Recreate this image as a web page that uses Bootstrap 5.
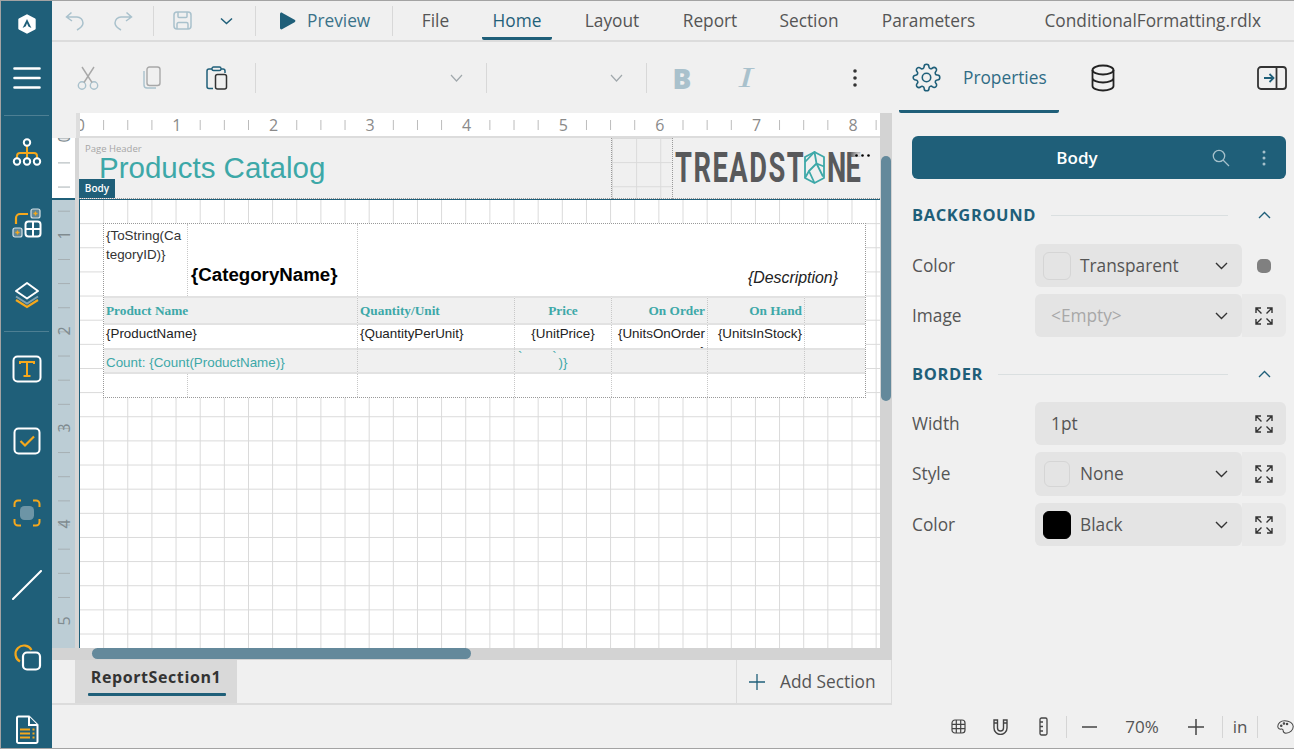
<!DOCTYPE html>
<html lang="en">
<head>
<meta charset="utf-8">
<title>ConditionalFormatting.rdlx</title>
<link href="https://cdn.jsdelivr.net/npm/bootstrap@5.3.0/dist/css/bootstrap.min.css" rel="stylesheet">
<style>
html,body{height:100%;margin:0;overflow:hidden}
body{font-family:"Open Sans",sans-serif;background:#f0f0f0;color:#555;font-size:17.3px}
.app-win{width:1294px;height:749px;border:1px solid #a3a3a3;border-right-width:0;overflow:hidden;background:#f0f0f0}
.side-rail{width:51px;background:#1f5f79;flex:none;overflow:hidden}
.rail-logo{height:46px;flex:none}.rail-menu{height:68px;flex:none;padding-bottom:6px}
.rail-sep{height:1px;background:#4d7f93;margin:0 3px;flex:none}
.rail-tool{height:72px;flex:none}
.rail-tool-a{height:71px}
.rail-gap{height:1px;flex:none}
.top-menu{height:41px;border-bottom:2px solid #dcdcdc;flex:none}
.tool-bar{height:71px;flex:none}
.slot{display:flex;align-items:center;justify-content:center;flex:none;height:100%}
.v-rule{width:1px;background:#d8d8d8;height:30px;display:block}
.w46{width:46px}.w49{width:49px}.w12{width:12px}.w42{width:42px}.w16{width:16px}.w21{width:21px}
.preview-slot{width:121px;justify-content:flex-start;padding-left:16px;color:#3a7289;gap:11px}
.mtab{color:#555;position:relative;padding-top:1px}
.mtab-file{width:71px}.mtab-home{width:70px;margin-left:11px;color:#1f5f79;border-bottom:3px solid #1f5f79;border-radius:0 0 2px 2px;padding-top:4px}
.mtab-layout{width:124px;padding-right:4px}.mtab-report{width:68px}.mtab-section{width:130px}.mtab-param{width:109px}
.file-name{margin-left:auto;padding-right:33px;padding-top:1px}
.t-cut{width:72px}.t-copy{width:56px}.t-paste{width:74px}.t-rule1{width:3px}
.t-font{width:225px;justify-content:flex-end;padding-right:19px}
.t-rule2{width:9px}
.t-size{width:151px;justify-content:flex-end;padding-right:19px}
.t-rule3{width:9px}
.t-b{width:62px}.t-i{width:66px}.t-more{width:120px;padding-left:32px}
.prop-tab{width:160px;height:71px;border-bottom:3px solid #1f5f79;color:#2f6c85;gap:22px;padding:3px 0 0 13px;border-radius:0 0 2px 2px;justify-content:flex-start}
.t-db{width:88px}.t-panel{margin-left:auto;width:44px}
.bold-b{font-family:"Open Sans",sans-serif;font-weight:800;font-size:28px;color:#a9c1cc;line-height:1}
.ital-i{font-family:"Liberation Serif",serif;font-style:italic;font-size:29px;color:#a9c1cc;line-height:1;display:inline-block;transform:scaleX(1.5)}
.main-row{flex:none;height:592px}
.work-col{width:840px;flex:none}
.design-row{height:535px;flex:none;overflow:hidden}
.ruler-pane{width:828px;flex:none}
.ruler-corner{height:25px;flex:none;overflow:hidden}
.corner-gap{width:24px;flex:none;background:#f0f0f0}
.corner-line{width:4px;flex:none;background:#dedede}
.top-ruler{flex:1;background-color:#fff;background-image:linear-gradient(90deg,#b9b9b9 1px,transparent 1px);background-size:24.15px 10px;background-position:-1px 7px;background-repeat:repeat-x;overflow:hidden;border-bottom:2px solid #dcdcdc;height:25px}
.top-num{width:96.6px;flex:none;text-align:center;line-height:24px;font-size:16px;color:#8a8a8a}
.top-num span{background:#fff;padding:0 3px}
.first-num{margin-left:-48px}
.left-ruler{width:23px;flex:none;overflow:hidden;background-color:#bccdd5}
.ruler-white{height:60px;flex:none;background-color:#fff;border-bottom:2px solid #1f5f79;overflow:hidden;box-sizing:content-box}
.ruler-ticks{background-image:linear-gradient(#a5aeb2 1px,transparent 1px);background-size:12px 24.15px;background-position:6px 0;background-repeat:repeat-y;height:100%}
.ruler-body{flex:1;overflow:hidden;margin-top:-62px;position:relative}
.left-num{height:96.6px;display:flex;align-items:center;justify-content:center;font-size:16px;color:#7f8b90;line-height:1}
.left-num span{display:block;transform:rotate(-90deg);padding:0 2px}
.left-first{margin-top:-48.3px}
.rule-gap{width:4px;flex:none;background:#d6d6d6}
.page-scroll{flex:1;overflow:hidden}
.page-head{height:62px;background:#f0f0f0;flex:none;position:relative;border-bottom:1px solid #1f5f79}
.head-title{width:533px;flex:none;border-right:1px dotted #999;border-bottom:1px dotted #999;position:relative;overflow:hidden}
.head-cap{font-size:9.5px;color:#a6a6a6;padding:5px 0 0 6px;line-height:12px}
.head-text{font-family:"Liberation Sans",sans-serif;font-size:29.5px;color:#3da8a8;line-height:30px;padding-left:20px;margin-top:-2px;white-space:nowrap}
.head-gap{width:60px;flex:none;background-image:linear-gradient(90deg,#dadada 1px,transparent 1px),linear-gradient(#dadada 1px,transparent 1px);background-size:24.15px 24.15px;background-position:0 0;border-bottom:1px dotted #999}
.head-logo{flex:1;border-left:1px dotted #999;border-bottom:1px dotted #999;position:relative;overflow:hidden;padding-left:2px}
.body-flag{position:absolute;left:0;top:41px;width:36px;height:19px;background:#1f5f79;color:#fff;font-size:10px;line-height:19px;text-align:center;font-weight:600}
.more-dots{position:absolute;left:178px;top:7px;width:22px;height:20px;display:flex;align-items:center;justify-content:center;background:radial-gradient(circle at 8px 10px,rgba(240,240,240,.9),rgba(240,240,240,0) 9px)}
.page-grid{flex:1;background-color:#fff;background-image:linear-gradient(90deg,#d9d9d9 1px,transparent 1px),linear-gradient(#d9d9d9 1px,transparent 1px);background-size:24.15px 24.15px;background-position:-1px -1px;padding:23px 0 0 23px;border-left:1px solid #1f5f79}
.rep-table{width:763px;box-sizing:border-box;display:grid;grid-template-columns:84px 170px 157px 97px 96px 97px 60px;grid-template-rows:72px 29px 23px 26px 23px;border:1px dotted #999;background:#fff;font-family:"Liberation Sans",sans-serif;font-size:13.4px;color:#222}
.rep-cell{overflow:hidden;line-height:15px}
.cell-r{border-right:1px dotted #c8c8c8}
.band{background:#f0f0f0}
.band-top{border-top:2px solid #e2e2e2}
.band-bot{border-bottom:2px solid #e2e2e2}
.cell-group{padding:2px 5px 0 2px;word-break:break-all;line-height:19px;color:#333}
.group-name{font-size:18.7px;font-weight:700;color:#000;padding:41px 0 0 3px;line-height:20px;white-space:nowrap}
.group-desc{grid-column:span 5;text-align:right;font-style:italic;font-size:15.9px;padding:45px 27px 0 0;line-height:18px;color:#222}
.col-head{font-family:"Liberation Serif",serif;font-weight:700;color:#3da8a8;font-size:13.3px;padding:5px 2px 0 2px;white-space:nowrap}
.col-wide{grid-column:span 2}
.col-data{padding:0 2px;line-height:18px;height:23px}
.col-clip{padding-left:4px}
.col-foot{color:#3da8a8;padding:5px 2px 0 2px;white-space:nowrap}
.txt-c{text-align:center}.txt-r{text-align:right}
.price-foot{color:#3da8a8;line-height:13px;padding:0;margin:0;white-space:pre}
.price-tick{height:5px;overflow:hidden;display:block;line-height:13px;padding-left:3px}
.price-end{display:block;text-align:center;line-height:16px}
.v-track{width:12px;flex:none;background:#d3d3d3;padding:43px 1px 0 1px}
.v-thumb{height:245px;background:#64899b;border-radius:5px}
.h-track{height:12px;flex:none;background:#d3d3d3;padding-left:40px}
.h-thumb{width:379px;height:11px;background:#64899b;border-radius:6px}
.tab-strip{height:45px;flex:none;border-bottom:2px solid #dcdcdc}
.rep-tab{width:162px;margin-left:23px;background:#d9d9d9;font-weight:700;font-size:16px;color:#333;letter-spacing:.6px;text-align:center;padding-top:4px;line-height:26px;height:43px}
.rep-tab i{display:block;height:3px;background:#1f5f79;margin:3px 11px 0 13px;border-radius:1px}
.add-sec{margin-left:auto;width:156px;border-left:1px solid #dcdcdc;border-right:1px solid #dcdcdc;gap:15px;padding-left:12px;height:43px;color:#555}
.work-wrap{flex:1;min-width:0}
.prop-pane{width:402px;flex:none;padding:23px 8px 0 20px}
.obj-bar{height:43px;background:#1f5f79;border-radius:6px;color:#fff;font-weight:600;font-size:17px;padding-left:32px}
.obj-name{width:266px;flex:none;text-align:center}
.obj-icon{width:22px}
.sec-head{color:#1f5f79;font-weight:700;font-size:16.5px;letter-spacing:.6px;line-height:22px}
.sec-bg{margin-top:25px}.sec-bd{margin-top:26px}
.sec-rule{flex:1;height:1px;background:#dadfe0;margin:0 0 0 15px}
.sec-chev{width:58px;padding-right:15px;display:flex;justify-content:flex-end}
.prop-row{height:43px;margin-bottom:7px}
.prop-row.first{margin-top:18px}
.prop-row.next{margin-top:17px}
.prop-row.tall{height:44px}
.prop-label{width:123px;flex:none;color:#555}
.label-low{padding-top:1px}
.sel-box{width:207px;height:100%;background:#e4e4e4;border-radius:6px;padding:0 14px 0 8px;flex:none}
.sel-full{width:251px;padding-left:16px;padding-right:13px}
.swatch{width:28px;height:28px;border:1px solid #d5d5d5;border-radius:6px;margin-right:9px;flex:none}
.swatch-small{width:26px;height:26px;margin-left:1px;margin-right:10px}
.swatch-black{background:#000;border-color:#000}
.empty-val{color:#a8a8a8;padding-left:8px}
.chev-end{margin-left:auto;display:flex}
.exp-btn{width:44px;height:100%;background:#e9e9e9;border-radius:0 6px 6px 0;flex:none}
.dot-btn{width:44px;height:100%;flex:none}
.flat-dot{width:14px;height:14px;border-radius:5px;background:#808080;display:block}
.status-bar{height:43px;flex:none;overflow:hidden;min-width:0}
.st-slot{height:100%;display:flex;align-items:center;justify-content:center;flex:none}
.s-grid{margin-left:885px;width:42px}.s-mag{width:42px}.s-rul{width:45px}
.s-minus{width:45px}.s-zoom{width:60px;font-size:17px}.s-plus{width:50px;padding-right:2px}.s-in{width:34px;font-size:17px}
.s-pal{width:36px;justify-content:flex-start;padding-left:19px}
.s-rule{width:1px;height:22px;background:#d5d5d5;display:block;flex:none}
</style>
</head>
<body>
<div class="app-win d-flex">
  <aside class="side-rail d-flex flex-column">
    <div class="rail-logo d-flex align-items-center justify-content-center">
      <svg width="20" height="22" viewBox="0 0 20 22"><path d="M10 1.2 18.2 5.6a1 1 0 0 1 .5.9v9a1 1 0 0 1-.5.9L10 20.8 1.8 16.4a1 1 0 0 1-.5-.9v-9a1 1 0 0 1 .5-.9z" fill="#fff"/><path d="M10 6 5.6 15l3.2-1.8 1.2-3 1.4 3.2 3 1.6z" fill="#1f5f79"/></svg>
    </div>
    <div class="rail-menu d-flex align-items-center justify-content-center">
      <svg width="28" height="24" viewBox="0 0 28 24" fill="none" stroke="#fff" stroke-width="2.6" stroke-linecap="round"><path d="M1.500 2.500h25M1.500 12h25M1.500 21.500h25"/></svg>
    </div>
    <div class="rail-sep"></div>
    <div class="rail-tool rail-tool-a d-flex align-items-center justify-content-center">
      <svg width="30" height="28" viewBox="0 0 30 28" fill="none" stroke-width="2"><path d="M15 8v7M5 21v-3a3 3 0 0 1 3-3h14a3 3 0 0 1 3 3v3M15 15v6" stroke="#f5a81c"/><g stroke="#fff"><circle cx="15" cy="4.500" r="3.200"/><circle cx="5" cy="23.500" r="3.200"/><circle cx="15" cy="23.500" r="3.200"/><circle cx="25" cy="23.500" r="3.200"/></g></svg>
    </div>
    <div class="rail-tool d-flex align-items-center justify-content-center">
      <svg width="30" height="30" viewBox="0 0 30 30" fill="none"><path d="M4 16v-6a4 4 0 0 1 4-4h8" stroke="#f5a81c" stroke-width="2.200"/><rect x="19" y="1" width="9" height="9" rx="2" fill="#5f8799" stroke="#d7e2e6" stroke-width="1.200"/><path d="M21.500 5.500h4M23.500 3.500v4" stroke="#f5a81c" stroke-width="1.300"/><rect x="1" y="20" width="9" height="9" rx="2" fill="#5f8799" stroke="#d7e2e6" stroke-width="1.200"/><path d="M3.500 24.500h4M5.500 22.500v4" stroke="#f5a81c" stroke-width="1.300"/><rect x="13.500" y="13.500" width="15" height="15" rx="3" fill="#1f5f79" stroke="#fff" stroke-width="2"/><path d="M21 13.500v15M13.500 21h15" stroke="#fff" stroke-width="2"/></svg>
    </div>
    <div class="rail-tool d-flex align-items-center justify-content-center">
      <svg width="26" height="28" viewBox="0 0 26 28" fill="none"><path d="M2 19l11 7 11-7" stroke="#f5a81c" stroke-width="2.200"/><path d="M2 15.500l11 7 11-7" stroke="#7fa1b0" stroke-width="2"/><path d="M13 2 24 10 13 17.500 2 10z" stroke="#fff" stroke-width="2" stroke-linejoin="round"/></svg>
    </div>
    <div class="rail-sep"></div>
    <div class="rail-gap"></div>
    <div class="rail-tool d-flex align-items-center justify-content-center">
      <svg width="30" height="28" viewBox="0 0 30 28" fill="none"><rect x="1.500" y="1.500" width="27" height="25" rx="4" stroke="#fff" stroke-width="2"/><path d="M8 9V7h14v2M15 7v14M11.500 21h7" stroke="#f5a81c" stroke-width="2"/></svg>
    </div>
    <div class="rail-tool d-flex align-items-center justify-content-center">
      <svg width="28" height="28" viewBox="0 0 28 28" fill="none"><rect x="1.500" y="1.500" width="25" height="25" rx="4" stroke="#fff" stroke-width="2"/><path d="M7.500 14l4.500 4.500 9-9" stroke="#f5a81c" stroke-width="2.200"/></svg>
    </div>
    <div class="rail-tool d-flex align-items-center justify-content-center">
      <svg width="28" height="28" viewBox="0 0 28 28" fill="none"><rect x="7" y="7" width="14" height="14" rx="4.500" fill="#6d95a6"/><path d="M1.500 8V5a3.500 3.500 0 0 1 3.500-3.500h3M20 1.500h3A3.500 3.500 0 0 1 26.500 5v3M26.500 20v3a3.500 3.500 0 0 1-3.500 3.500h-3M8 26.500H5A3.500 3.500 0 0 1 1.500 23v-3" stroke="#f5a81c" stroke-width="2"/></svg>
    </div>
    <div class="rail-tool d-flex align-items-center justify-content-center">
      <svg width="30" height="30" viewBox="0 0 30 30" fill="none"><path d="M1 29 29 1" stroke="#fff" stroke-width="2" stroke-linecap="round"/></svg>
    </div>
    <div class="rail-tool d-flex align-items-center justify-content-center">
      <svg width="30" height="30" viewBox="0 0 30 30" fill="none"><path d="M8 19.500A8.500 8.500 0 1 1 19.500 8" stroke="#f5a81c" stroke-width="2.200"/><rect x="11" y="10.500" width="17" height="17" rx="4" stroke="#fff" stroke-width="2.200"/></svg>
    </div>
    <div class="rail-tool d-flex align-items-center justify-content-center">
      <svg width="24" height="29" viewBox="0 0 24 29" fill="none"><path d="M2 3a1.500 1.500 0 0 1 1.500-1.500H14L22.500 10v16.500A1.500 1.500 0 0 1 21 28H3.500A1.500 1.500 0 0 1 2 26.500z" stroke="#fff" stroke-width="2"/><path d="M14 1.500V10h8.500" stroke="#fff" stroke-width="2" fill="#1f5f79"/><path d="M5 14.500h10M5 18.500h10M5 22.500h10" stroke="#f5a81c" stroke-width="2"/><path d="M17.500 14.500h2M17.500 18.500h2M17.500 22.500h2" stroke="#f5a81c" stroke-width="2"/></svg>
    </div>
  </aside>

  <div class="work-wrap d-flex flex-column">
    <nav class="top-menu d-flex align-items-center">
      <div class="slot w46"><svg width="20" height="20" viewBox="0 0 20 20" fill="none" stroke="#a9c1cc" stroke-width="1.500"><path d="M6.500 1.500 1.500 6 7 10M1.500 6H12a6 6 0 0 1 6 6c0 2.500-2.500 5-6 7"/></svg></div>
      <div class="slot w49"><svg width="20" height="20" viewBox="0 0 20 20" fill="none" stroke="#a9c1cc" stroke-width="1.500"><path d="M13.500 1.500 18.500 6 13 10M18.500 6H8a6 6 0 0 0-6 6c0 2.500 2.500 5 6 7"/></svg></div>
      <div class="slot w12"><span class="v-rule"></span></div>
      <div class="slot w46"><svg width="19" height="19" viewBox="0 0 19 19" fill="none" stroke="#a9c1cc" stroke-width="1.500"><rect x="1" y="1" width="17" height="17" rx="3"/><path d="M5 1v4.500a1 1 0 0 0 1 1h7a1 1 0 0 0 1-1V1M4 18v-5a1.500 1.500 0 0 1 1.500-1.500h8A1.500 1.500 0 0 1 15 13v5"/></svg></div>
      <div class="slot w42"><svg width="13" height="8" viewBox="0 0 13 8" fill="none" stroke="#1f5f79" stroke-width="1.500"><path d="M1 1.500l5.500 5 5.500-5"/></svg></div>
      <div class="slot w16"><span class="v-rule"></span></div>
      <div class="slot preview-slot"><svg width="17" height="18" viewBox="0 0 17 18"><path d="M1 2.200C1 .8 2.300.2 3.400.9L15.600 7.800c1.100.6 1.100 1.800 0 2.400L3.400 17.100C2.300 17.800 1 17.200 1 15.800z" fill="#1f5f79"/></svg><span>Preview</span></div>
      <div class="slot w16"><span class="v-rule"></span></div>
      <div class="slot mtab mtab-file">File</div>
      <div class="slot mtab mtab-home">Home</div>
      <div class="slot mtab mtab-layout">Layout</div>
      <div class="slot mtab mtab-report">Report</div>
      <div class="slot mtab mtab-section">Section</div>
      <div class="slot mtab mtab-param">Parameters</div>
      <div class="file-name">ConditionalFormatting.rdlx</div>
    </nav>

    <div class="tool-bar d-flex align-items-center">
      <div class="slot t-cut"><svg width="22" height="24" viewBox="0 0 22 24" fill="none" stroke="#a9c1cc" stroke-width="1.400"><circle cx="5" cy="19.500" r="3.700"/><circle cx="17" cy="19.500" r="3.700"/><path d="M7 16.500 17 1" stroke="#a8a8a8"/><path d="M15 16.500 5 1" stroke="#a8a8a8"/></svg></div>
      <div class="slot t-copy"><svg width="18" height="23" viewBox="0 0 18 23" fill="none"><rect x="4" y="1" width="13" height="18.500" rx="2.500" stroke="#a8a8a8" stroke-width="1.400"/><path d="M1 5v14a3 3 0 0 0 3 3h9" stroke="#a9c1cc" stroke-width="1.400"/></svg></div>
      <div class="slot t-paste"><svg width="22" height="24" viewBox="0 0 22 24" fill="none"><path d="M6 3H3a2 2 0 0 0-2 2v15.500a2 2 0 0 0 2 2h4M15 3h2a2 2 0 0 1 2 2v2" stroke="#1f5f79" stroke-width="1.500"/><rect x="6" y="1" width="9" height="3.500" rx="1.500" stroke="#1f5f79" stroke-width="1.400"/><rect x="9.500" y="8.500" width="11" height="14.500" rx="2" stroke="#333" stroke-width="1.500"/></svg></div>
      <div class="slot t-rule1"><span class="v-rule"></span></div>
      <div class="slot t-font"><svg width="13" height="8" viewBox="0 0 13 8" fill="none" stroke="#a0a8ac" stroke-width="1.200"><path d="M1 1l5.500 6L12 1"/></svg></div>
      <div class="slot t-rule2"><span class="v-rule"></span></div>
      <div class="slot t-size"><svg width="13" height="8" viewBox="0 0 13 8" fill="none" stroke="#a0a8ac" stroke-width="1.200"><path d="M1 1l5.500 6L12 1"/></svg></div>
      <div class="slot t-rule3"><span class="v-rule"></span></div>
      <div class="slot t-b"><span class="bold-b">B</span></div>
      <div class="slot t-i"><span class="ital-i">I</span></div>
      <div class="slot t-more"><svg width="4" height="18" viewBox="0 0 4 18" fill="#333"><circle cx="2" cy="2" r="1.800"/><circle cx="2" cy="9" r="1.800"/><circle cx="2" cy="16" r="1.800"/></svg></div>
      <div class="slot prop-tab">
        <svg width="29" height="29" viewBox="0 0 24 24" fill="none" stroke="#1f5f79" stroke-width="1.300"><circle cx="12" cy="12" r="3.500"/><path d="M19.400 15a1.650 1.650 0 0 0 .33 1.820l.06.06a2 2 0 0 1 0 2.830 2 2 0 0 1-2.830 0l-.06-.06a1.650 1.650 0 0 0-1.820-.33 1.650 1.650 0 0 0-1 1.510V21a2 2 0 0 1-2 2 2 2 0 0 1-2-2v-.09A1.650 1.650 0 0 0 9 19.400a1.650 1.650 0 0 0-1.820.33l-.06.06a2 2 0 0 1-2.830 0 2 2 0 0 1 0-2.830l.06-.06a1.650 1.650 0 0 0 .33-1.820 1.650 1.650 0 0 0-1.510-1H3a2 2 0 0 1-2-2 2 2 0 0 1 2-2h.09A1.650 1.650 0 0 0 4.600 9a1.650 1.650 0 0 0-.33-1.820l-.06-.06a2 2 0 0 1 0-2.830 2 2 0 0 1 2.830 0l.06.06a1.650 1.650 0 0 0 1.820.33H9a1.650 1.650 0 0 0 1-1.510V3a2 2 0 0 1 2-2 2 2 0 0 1 2 2v.09a1.650 1.650 0 0 0 1 1.510 1.650 1.650 0 0 0 1.820-.33l.06-.06a2 2 0 0 1 2.830 0 2 2 0 0 1 0 2.830l-.06.06a1.650 1.650 0 0 0-.33 1.820V9a1.650 1.650 0 0 0 1.510 1H21a2 2 0 0 1 2 2 2 2 0 0 1-2 2h-.09a1.650 1.650 0 0 0-1.510 1z"/></svg>
        <span>Properties</span>
      </div>
      <div class="slot t-db"><svg width="24" height="28" viewBox="0 0 24 28" fill="none" stroke="#222" stroke-width="1.800"><ellipse cx="12" cy="6" rx="10.500" ry="4.500"/><path d="M1.500 6v16c0 2.500 4.700 4.500 10.500 4.500s10.500-2 10.500-4.500V6M1.500 14c0 2.500 4.700 4.500 10.500 4.500s10.500-2 10.500-4.500"/></svg></div>
      <div class="slot t-panel"><svg width="30" height="24" viewBox="0 0 30 24" fill="none"><rect x="1" y="1" width="28" height="22" rx="3" stroke="#333" stroke-width="1.800"/><path d="M19.500 1v22" stroke="#333" stroke-width="1.800"/><path d="M7 12h9M12.500 8l4 4-4 4" stroke="#1f5f79" stroke-width="1.800"/></svg></div>
    </div>

    <div class="main-row d-flex">
      <div class="work-col d-flex flex-column">
        <div class="design-row d-flex">
          <div class="ruler-pane d-flex flex-column">
            <div class="ruler-corner d-flex">
              <div class="corner-gap"></div>
              <div class="corner-line"></div>
              <div class="top-ruler d-flex">
                <div class="top-num first-num"><span>0</span></div>
                <div class="top-num"><span>1</span></div>
                <div class="top-num"><span>2</span></div>
                <div class="top-num"><span>3</span></div>
                <div class="top-num"><span>4</span></div>
                <div class="top-num"><span>5</span></div>
                <div class="top-num"><span>6</span></div>
                <div class="top-num"><span>7</span></div>
                <div class="top-num"><span>8</span></div>
              </div>
            </div>
            <div class="d-flex flex-fill overflow-hidden">
              <div class="left-ruler d-flex flex-column">
                <div class="ruler-white"></div>
                <div class="ruler-body">
                  <div class="ruler-ticks">
                    <div class="left-num left-first"><span>0</span></div>
                    <div class="left-num"><span>1</span></div>
                    <div class="left-num"><span>2</span></div>
                    <div class="left-num"><span>3</span></div>
                    <div class="left-num"><span>4</span></div>
                    <div class="left-num"><span>5</span></div>
                  </div>
                </div>
              </div>
              <div class="rule-gap"></div>
              <div class="page-scroll d-flex flex-column">
                <div class="page-head d-flex">
                  <div class="head-title">
                    <div class="head-cap">Page Header</div>
                    <div class="head-text">Products Catalog</div>
                  </div>
                  <div class="head-gap"></div>
                  <div class="head-logo">
                    <svg width="200" height="58" viewBox="0 0 200 58">
                      <text transform="scale(.65 1)" x="0" y="44" textLength="198" lengthAdjust="spacing" font-family="Roboto, sans-serif" font-weight="700" font-size="42" fill="#58595b">TREADST</text>
                      <g fill="none" stroke="#3da8a8" stroke-width="1.800" stroke-linejoin="round"><path d="M139.500 14l9.500 5v21l-9.500 5-9.500-5V19z"/><path d="M130 24l9.500-10 2 11.500 7.500 3M141.500 25.500 134 33l5.500 12M134 33l-4 7M141.500 25.500l6.500 13"/></g>
                      <text transform="scale(.65 1)" x="234" y="44" textLength="52" lengthAdjust="spacing" font-family="Roboto, sans-serif" font-weight="700" font-size="42" fill="#58595b">NE</text>
                    </svg>
                    <div class="more-dots"><svg width="15" height="3" viewBox="0 0 15 3" fill="#000"><circle cx="1.500" cy="1.500" r="1.300"/><circle cx="7.500" cy="1.500" r="1.300"/><circle cx="13.500" cy="1.500" r="1.300"/></svg></div>
                  </div>
                  <div class="body-flag">Body</div>
                </div>
                <div class="page-grid">
                  <div class="rep-table">
                    <div class="rep-cell cell-group cell-r">{ToString(CategoryID)}</div>
                    <div class="rep-cell group-name cell-r">{CategoryName}</div>
                    <div class="rep-cell group-desc">{Description}</div>

                    <div class="rep-cell col-head band band-top band-bot col-wide cell-r">Product Name</div>
                    <div class="rep-cell col-head band band-top band-bot cell-r">Quantity/Unit</div>
                    <div class="rep-cell col-head band band-top band-bot cell-r txt-c">Price</div>
                    <div class="rep-cell col-head band band-top band-bot cell-r txt-r">On Order</div>
                    <div class="rep-cell col-head band band-top band-bot cell-r txt-r">On Hand</div>
                    <div class="rep-cell col-head band band-top band-bot"></div>

                    <div class="rep-cell col-data col-wide cell-r">{ProductName}</div>
                    <div class="rep-cell col-data cell-r">{QuantityPerUnit}</div>
                    <div class="rep-cell col-data cell-r txt-c">{UnitPrice}</div>
                    <div class="rep-cell col-data col-clip cell-r txt-r">{UnitsOnOrder<wbr>}</div>
                    <div class="rep-cell col-data cell-r txt-r">{UnitsInStock}</div>
                    <div class="rep-cell col-data"></div>

                    <div class="rep-cell col-foot band band-top band-bot col-wide cell-r">Count: {Count(ProductName)}</div>
                    <div class="rep-cell band band-top band-bot cell-r"></div>
                    <div class="rep-cell band band-top band-bot cell-r price-foot"><span class="price-tick">`        `</span><span class="price-end">)}</span></div>
                    <div class="rep-cell band band-top band-bot cell-r"></div>
                    <div class="rep-cell band band-top band-bot cell-r"></div>
                    <div class="rep-cell band band-top band-bot"></div>

                    <div class="rep-cell cell-r"></div>
                    <div class="rep-cell cell-r"></div>
                    <div class="rep-cell cell-r"></div>
                    <div class="rep-cell cell-r"></div>
                    <div class="rep-cell cell-r"></div>
                    <div class="rep-cell cell-r"></div>
                    <div class="rep-cell"></div>
                  </div>
                </div>
              </div>
            </div>
          </div>
          <div class="v-track"><div class="v-thumb"></div></div>
        </div>
        <div class="h-track"><div class="h-thumb"></div></div>
        <div class="tab-strip d-flex">
          <div class="rep-tab">ReportSection1<i></i></div>
          <div class="add-sec d-flex align-items-center"><svg width="16" height="16" viewBox="0 0 16 16" fill="none" stroke="#1f5f79" stroke-width="1.300"><path d="M8 0v16M0 8h16"/></svg><span>Add Section</span></div>
        </div>
      </div>

      <section class="prop-pane flex-fill">
        <div class="obj-bar d-flex align-items-center">
          <div class="obj-name">Body</div>
          <div class="slot obj-icon"><svg width="18" height="18" viewBox="0 0 18 18" fill="none" stroke="#a5c0cb" stroke-width="1.300"><circle cx="7" cy="7" r="5.700"/><path d="M11 11l6 6"/></svg></div>
          <div class="slot w21"></div>
          <div class="slot obj-icon"><svg width="4" height="16" viewBox="0 0 4 16" fill="#a5c0cb"><circle cx="2" cy="2" r="1.500"/><circle cx="2" cy="8" r="1.500"/><circle cx="2" cy="14" r="1.500"/></svg></div>
        </div>

        <div class="sec-head sec-bg d-flex align-items-center">BACKGROUND<span class="sec-rule"></span><span class="sec-chev"><svg width="13" height="8" viewBox="0 0 13 8" fill="none" stroke="#1f5f79" stroke-width="1.400"><path d="M1 7l5.500-5.500L12 7"/></svg></span></div>
        <div class="prop-row first d-flex align-items-center">
          <div class="prop-label label-low">Color</div>
          <div class="sel-box d-flex align-items-center"><span class="swatch"></span>Transparent<span class="chev-end"><svg width="13" height="8" viewBox="0 0 13 8" fill="none" stroke="#333" stroke-width="1.400"><path d="M1 1l5.500 5.500L12 1"/></svg></span></div>
          <div class="dot-btn d-flex align-items-center justify-content-center"><span class="flat-dot"></span></div>
        </div>
        <div class="prop-row d-flex align-items-center">
          <div class="prop-label label-low">Image</div>
          <div class="sel-box d-flex align-items-center"><span class="empty-val">&lt;Empty&gt;</span><span class="chev-end"><svg width="13" height="8" viewBox="0 0 13 8" fill="none" stroke="#333" stroke-width="1.400"><path d="M1 1l5.500 5.500L12 1"/></svg></span></div>
          <div class="exp-btn d-flex align-items-center justify-content-center"><svg width="18" height="18" viewBox="0 0 18 18" fill="none" stroke="#333" stroke-width="1.400"><path d="M1 6V1h5M1 1l5.500 5.500M12 1h5v5M17 1l-5.500 5.500M1 12v5h5M1 17l5.500-5.500M17 12v5h-5M17 17l-5.500-5.500"/></svg></div>
        </div>

        <div class="sec-head sec-bd d-flex align-items-center">BORDER<span class="sec-rule"></span><span class="sec-chev"><svg width="13" height="8" viewBox="0 0 13 8" fill="none" stroke="#1f5f79" stroke-width="1.400"><path d="M1 7l5.500-5.500L12 7"/></svg></span></div>
        <div class="prop-row next d-flex align-items-center">
          <div class="prop-label">Width</div>
          <div class="sel-box sel-full d-flex align-items-center">1pt<span class="chev-end"><svg width="18" height="18" viewBox="0 0 18 18" fill="none" stroke="#333" stroke-width="1.400"><path d="M1 6V1h5M1 1l5.500 5.500M12 1h5v5M17 1l-5.500 5.500M1 12v5h5M1 17l5.500-5.500M17 12v5h-5M17 17l-5.500-5.500"/></svg></span></div>
        </div>
        <div class="prop-row tall d-flex align-items-center">
          <div class="prop-label">Style</div>
          <div class="sel-box d-flex align-items-center"><span class="swatch swatch-small"></span>None<span class="chev-end"><svg width="13" height="8" viewBox="0 0 13 8" fill="none" stroke="#333" stroke-width="1.400"><path d="M1 1l5.500 5.500L12 1"/></svg></span></div>
          <div class="exp-btn d-flex align-items-center justify-content-center"><svg width="18" height="18" viewBox="0 0 18 18" fill="none" stroke="#333" stroke-width="1.400"><path d="M1 6V1h5M1 1l5.500 5.500M12 1h5v5M17 1l-5.500 5.500M1 12v5h5M1 17l5.500-5.500M17 12v5h-5M17 17l-5.500-5.500"/></svg></div>
        </div>
        <div class="prop-row d-flex align-items-center">
          <div class="prop-label">Color</div>
          <div class="sel-box d-flex align-items-center"><span class="swatch swatch-black"></span>Black<span class="chev-end"><svg width="13" height="8" viewBox="0 0 13 8" fill="none" stroke="#333" stroke-width="1.400"><path d="M1 1l5.500 5.500L12 1"/></svg></span></div>
          <div class="exp-btn d-flex align-items-center justify-content-center"><svg width="18" height="18" viewBox="0 0 18 18" fill="none" stroke="#333" stroke-width="1.400"><path d="M1 6V1h5M1 1l5.500 5.500M12 1h5v5M17 1l-5.500 5.500M1 12v5h5M1 17l5.500-5.500M17 12v5h-5M17 17l-5.500-5.500"/></svg></div>
        </div>
      </section>
    </div>

    <footer class="status-bar d-flex align-items-center">
      <div class="st-slot s-grid"><svg width="15" height="15" viewBox="0 0 15 15" fill="none" stroke="#444" stroke-width="1.200"><rect x="1" y="1" width="13" height="13" rx="3"/><path d="M5.300 1v13M9.700 1v13M1 5.300h13M1 9.700h13"/></svg></div>
      <div class="st-slot s-mag"><svg width="15" height="17" viewBox="0 0 15 17" fill="none" stroke="#444" stroke-width="1.400"><path d="M1 2h3.500v8a3 3 0 0 0 6 0V2H14v8a6.500 6.500 0 0 1-13 0z"/><path d="M1 5h3.500M10.500 5H14"/></svg></div>
      <div class="st-slot s-rul"><svg width="9" height="19" viewBox="0 0 9 19" fill="none" stroke="#444" stroke-width="1.300"><rect x="1" y="1" width="7" height="17" rx="1.500"/><path d="M1 5h3M1 9.500h3M1 14h3"/></svg></div>
      <span class="s-rule"></span>
      <div class="st-slot s-minus"><svg width="15" height="2" viewBox="0 0 15 2" stroke="#444" stroke-width="1.500"><path d="M0 1h15"/></svg></div>
      <div class="st-slot s-zoom">70%</div>
      <div class="st-slot s-plus"><svg width="16" height="16" viewBox="0 0 16 16" stroke="#444" stroke-width="1.500"><path d="M8 0v16M0 8h16"/></svg></div>
      <span class="s-rule"></span>
      <div class="st-slot s-in">in</div>
      <span class="s-rule"></span>
      <div class="st-slot s-pal"><svg width="22" height="18" viewBox="0 0 22 18" fill="none" stroke="#444" stroke-width="1.300"><path d="M10 1C5 1 1 4 1 8.500c0 3 3 3.500 4.500 3.200S8 12.500 8 14c0 2 1 3 3.500 3C17 17 21 13 21 8.500S16 1 10 1z"/><circle cx="5.500" cy="7.500" r="1" fill="#444"/><circle cx="9" cy="4.500" r="1" fill="#444"/><circle cx="13" cy="5" r="1" fill="#444"/></svg></div>
    </footer>
  </div>
</div>
<script src="https://cdn.jsdelivr.net/npm/bootstrap@5.3.0/dist/js/bootstrap.bundle.min.js"></script>
</body>
</html>
